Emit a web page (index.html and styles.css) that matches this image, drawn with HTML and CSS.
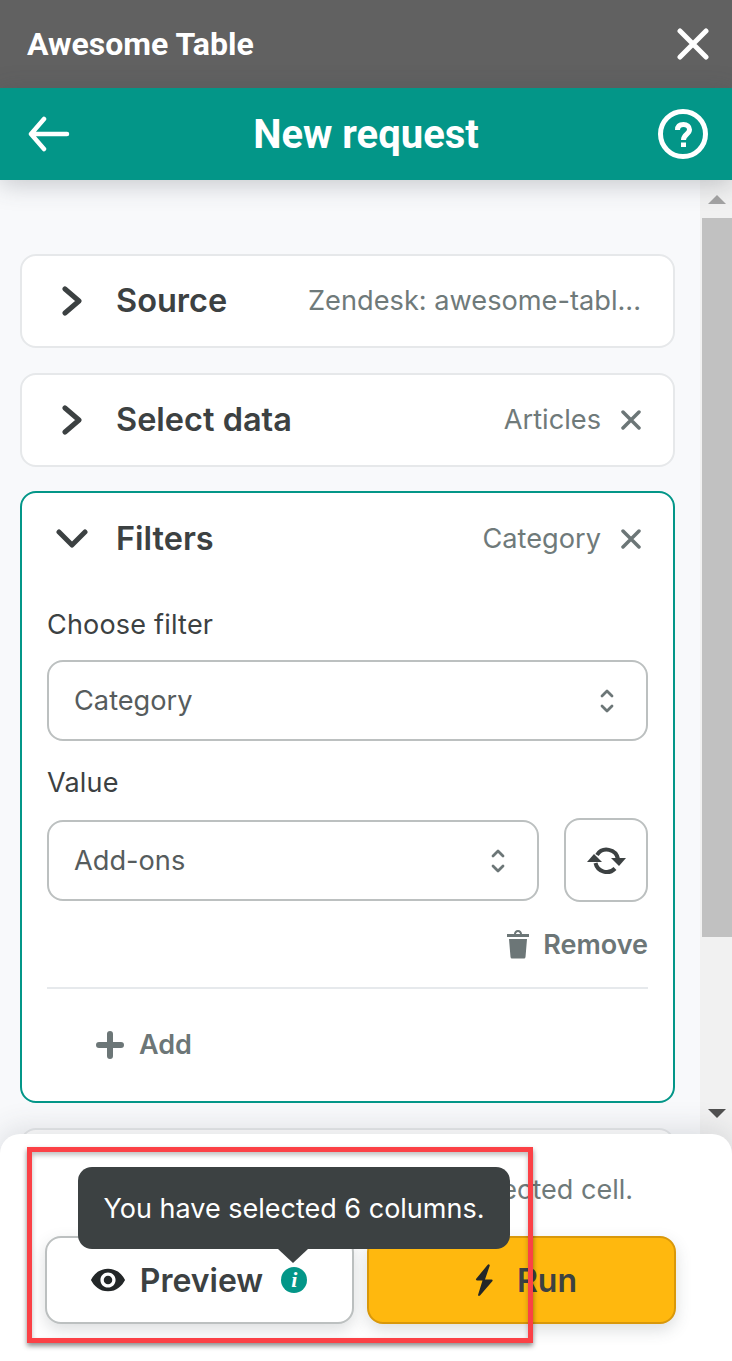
FILE: index.html
```html
<!DOCTYPE html>
<html lang="en">
<head>
<meta charset="utf-8">
<title>Awesome Table</title>
<link rel="stylesheet" href="styles.css">
</head>
<body>
<div class="app">
  <header class="titlebar">
    <span class="app-name">Awesome Table</span>
    <svg class="close-icon" viewBox="0 0 32 32"><path d="M3 3 L29 29 M29 3 L3 29"/></svg>
  </header>
  <header class="navbar">
    <svg class="back-icon" viewBox="0 0 42 36"><path d="M39 18 H4 M16 3 L3 18 L16 33"/></svg>
    <h1 class="nav-title">New request</h1>
    <svg class="help-icon" viewBox="0 0 50 50"><circle cx="25" cy="25" r="22.5"/><path d="M19.5 21 C19.500 17 22 15.500 25.500 15.500 C29 15.500 31.500 17.500 31.500 20.500 C31.500 25.500 25.500 25 25.500 31"/><path class="dot" d="M25.5 33.500 V38"/></svg>
  </header>
  <div class="body">
    <main class="content">
      <section class="card">
        <div class="card-head">
          <span class="chev-box"><svg class="chev" viewBox="0 0 20 30"><path d="M3 3 L17 15 L3 27"/></svg></span>
          <span class="card-title">Source</span>
          <span class="card-value">Zendesk: awesome-tabl...</span>
        </div>
      </section>
      <section class="card">
        <div class="card-head">
          <span class="chev-box"><svg class="chev" viewBox="0 0 20 30"><path d="M3 3 L17 15 L3 27"/></svg></span>
          <span class="card-title">Select data</span>
          <span class="card-value">Articles</span>
          <svg class="x-icon" viewBox="0 0 20 20"><path d="M2 2 L18 18 M18 2 L2 18"/></svg>
        </div>
      </section>
      <section class="card card-open">
        <div class="card-head">
          <span class="chev-box"><svg class="chev-down" viewBox="0 0 32 20"><path d="M3 3 L16 16 L29 3"/></svg></span>
          <span class="card-title">Filters</span>
          <span class="card-value">Category</span>
          <svg class="x-icon" viewBox="0 0 20 20"><path d="M2 2 L18 18 M18 2 L2 18"/></svg>
        </div>
        <div class="card-body">
          <label class="field-label">Choose filter</label>
          <div class="select select-full">
            <span>Category</span>
            <svg class="updown" viewBox="0 0 14 24"><path d="M2 7 L7 2 L12 7 M2 17 L7 22 L12 17"/></svg>
          </div>
          <label class="field-label field-label-value">Value</label>
          <div class="value-row">
            <div class="select select-grow">
              <span>Add-ons</span>
              <svg class="updown" viewBox="0 0 14 24"><path d="M2 7 L7 2 L12 7 M2 17 L7 22 L12 17"/></svg>
            </div>
            <button class="refresh">
              <svg class="refresh-icon" viewBox="0 0 40 30"><path class="ring" d="M11 10 A11.500 11.500 0 0 1 32 14 M29 23.500 A11.500 11.500 0 0 1 9.500 18"/><path class="tip" d="M1 17 L8 9 L16 17 Z M25 13 L40 13 L33 21 Z"/></svg>
            </button>
          </div>
          <div class="remove-row">
            <svg class="trash" viewBox="0 0 24 30"><path d="M1 5 H8 C8 3 9.500 1 12 1 C14.500 1 16 3 16 5 H23 V8 H1 Z M10 5 H14 C14 4 13 3 12 3 C11 3 10 4 10 5 Z M3 10 H21 L19.500 28 Q19.300 29.500 18 29.500 H6 Q4.700 29.500 4.500 28 Z"/></svg>
            <span>Remove</span>
          </div>
          <div class="add-row">
            <svg class="plus" viewBox="0 0 28 28"><path d="M14 3 V25 M3 14 H25"/></svg>
            <span>Add</span>
          </div>
        </div>
      </section>
      <section class="card card-next"></section>
    </main>
    <div class="scrollbar">
      <div class="scroll-arrow"><span class="tri-up"></span></div>
      <div class="scroll-thumb"></div>
      <div class="scroll-rest"></div>
      <div class="scroll-arrow-down"><span class="tri-down"></span></div>
    </div>
    <footer class="footer">
      <p class="footer-note">Results will be inserted in the selected cell.</p>
      <div class="actions">
        <button class="btn btn-preview">
          <svg class="eye" viewBox="0 0 38 26"><path fill-rule="evenodd" d="M19 1 C28 1 34 7 37 13 C34 19 28 25 19 25 C10 25 4 19 1 13 C4 7 10 1 19 1 Z M19 5 C14.500 5 11 8.500 11 13 C11 17.500 14.500 21 19 21 C23.500 21 27 17.500 27 13 C27 8.500 23.500 5 19 5 Z"/><circle cx="19" cy="13" r="4.500"/></svg>
          <span>Preview</span>
          <span class="info">i</span>
        </button>
        <button class="btn btn-run">
          <svg class="bolt" viewBox="0 0 20 34"><path d="M13.500 2 L2 16 Q1.500 17.500 3.500 17.500 H8.500 L4 32 Q4.500 33.500 6 32.500 L18.500 18 Q19 16.500 17.500 16.500 H11 L15.800 2.500 Q15 .5 13.500 2 Z"/></svg>
          <span>Run</span>
        </button>
      </div>
      <div class="tooltip">You have selected 6 columns.</div>
    </footer>
    <div class="annotation"></div>
  </div>
</div>
</body>
</html>
```

FILE: styles.css
```css
* { box-sizing: border-box; }
html, body { margin: 0; padding: 0; }
body { font-family: "Inter", "Liberation Sans", sans-serif; color: #3c4142; background: #f8f9fb; }
.app { width: 732px; height: 1361px; display: flex; flex-direction: column; overflow: hidden; }

.titlebar { height: 88px; flex: none; background: #616161; display: flex; align-items: center; justify-content: space-between; padding: 0 23px 0 27px; }
.app-name { font-family: "Roboto", sans-serif; font-weight: 700; font-size: 32px; color: #fff; }
.close-icon { width: 32px; height: 32px; fill: none; stroke: #fff; stroke-width: 5; stroke-linecap: round; }

.navbar { height: 92px; flex: none; background: #039688; display: flex; align-items: center; justify-content: space-between; padding: 0 24px 0 28px; box-shadow: 0 4px 24px rgba(60, 70, 80, .28); position: relative; z-index: 2; }
.nav-title { margin: 0; font-family: "Roboto", sans-serif; font-weight: 700; font-size: 40px; color: #fff; position: relative; left: 2px; }
.back-icon { width: 42px; height: 36px; fill: none; stroke: #fff; stroke-width: 4.500; stroke-linecap: round; stroke-linejoin: round; }
.help-icon { width: 50px; height: 50px; fill: none; stroke: #fff; stroke-width: 5; }
.help-icon .dot { stroke-width: 5; }

.body { flex: 1; display: flex; position: relative; min-height: 0; }
.content { width: 700px; flex: none; padding: 74px 25px 0 20px; display: flex; flex-direction: column; gap: 25px; overflow: hidden; }

.card { background: #fff; border: 2px solid #e6e8ea; border-radius: 16px; flex: none; height: 94px; }
.card-open { border-color: #039688; height: 612px; margin-top: -1px; }
.card-open .card-head { height: 90px; padding-top: 1px; }
.card-head { height: 89px; display: flex; align-items: center; padding: 0 32px 0 0; }
.chev-box { width: 94px; flex: none; display: flex; justify-content: center; padding-left: 6px; }
.chev { width: 20px; height: 30px; fill: none; stroke: #3c4142; stroke-width: 5; stroke-linecap: round; stroke-linejoin: round; }
.chev-down { width: 32px; height: 20px; fill: none; stroke: #3c4142; stroke-width: 5; stroke-linecap: round; stroke-linejoin: round; }
.card-title { font-size: 32.5px; font-weight: 600; color: #3c4142; flex: 1; }
.card-value { font-size: 27.2px; color: #6f7a7a; }
.x-icon { width: 20px; height: 20px; margin-left: 20px; fill: none; stroke: #6c7677; stroke-width: 3.500; stroke-linecap: round; }

.card-body { padding: 0 25px; }
.field-label { display: block; font-size: 27px; letter-spacing: .2px; color: #3c4142; line-height: 34px; }
.card-body > .field-label:first-child { margin-top: 25px; }
.field-label-value { margin-top: 25px; }
.select { height: 81px; border: 2px solid #bcc0c0; border-radius: 16px; display: flex; align-items: center; justify-content: space-between; padding: 0 32px 0 25px; font-size: 27.2px; color: #565c5d; background: #fff; }
.select-full { margin-top: 18px; }
.select-grow { flex: 1; }
.updown { width: 14px; height: 24px; fill: none; stroke: #6c7677; stroke-width: 2.800; stroke-linecap: round; stroke-linejoin: round; }
.value-row { display: flex; gap: 25px; margin-top: 20px; }
.refresh { width: 84px; height: 84px; margin-top: -2px; border: 2px solid #bcc0c0; border-radius: 16px; background: #fff; display: flex; align-items: center; justify-content: center; padding: 0; }
.refresh-icon { width: 40px; height: 30px; }
.refresh-icon .ring { fill: none; stroke: #3c4142; stroke-width: 4; }
.refresh-icon .tip { fill: #3c4142; }

.remove-row { display: flex; justify-content: flex-end; align-items: center; gap: 13px; margin-top: 26px; font-size: 27px; font-weight: 600; color: #6c7677; height: 32px; }
.trash { width: 24px; height: 30px; fill: #6c7677; }
.add-row { margin-top: 27px; border-top: 2px solid #e6e9ec; padding: 39px 0 0 49px; display: flex; align-items: center; gap: 15px; font-size: 27px; font-weight: 600; color: #6c7677; }
.plus { width: 28px; height: 28px; fill: none; stroke: #6c7677; stroke-width: 6; stroke-linecap: round; }

.scrollbar { width: 32px; flex: none; background: #f1f1f1; display: flex; flex-direction: column; }
.scroll-arrow { height: 38px; flex: none; display: flex; justify-content: center; align-items: center; padding-left: 2px; }
.scroll-thumb { height: 719px; flex: none; margin-left: 2px; background: #c1c1c1; }
.scroll-rest { height: 166px; flex: none; }
.scroll-arrow-down { height: 20px; flex: none; display: flex; justify-content: center; align-items: center; padding-left: 2px; }
.tri-up { width: 0; height: 0; border-left: 9px solid transparent; border-right: 9px solid transparent; border-bottom: 9px solid #a3a3a3; }
.tri-down { width: 0; height: 0; border-left: 9px solid transparent; border-right: 9px solid transparent; border-top: 9px solid #505050; }

.footer { position: absolute; left: 0; right: 0; top: 954px; height: 227px; background: #fff; border-radius: 20px 20px 0 0; box-shadow: 0 -4px 30px rgba(60, 70, 80, .16); z-index: 3; padding: 39px 56px 0 45px; }
.footer-note { margin: 0 -56px 0 0; height: 34px; line-height: 34px; font-size: 27px; color: #6f7a7a; text-align: right; padding-right: 99px; white-space: nowrap; }
.actions { display: grid; grid-template-columns: 1fr 1fr; gap: 13px; margin-top: 29px; width: 631px; }
.btn { height: 88px; min-width: 0; border-radius: 16px; display: flex; align-items: center; justify-content: center; font-family: "Inter", sans-serif; font-size: 32px; font-weight: 600; color: #3c4142; padding: 0; box-shadow: 0 6px 16px rgba(60, 70, 80, .18); }
.btn-preview { background: #fff; border: 2px solid #bcc0c0; gap: 14px; padding-right: 2px; }
.btn-run { background: #ffb80e; border: 2px solid #d9980a; gap: 23px; padding-left: 8px; }
.eye { width: 36px; height: 26px; fill: #232728; }
.bolt { width: 20px; height: 34px; fill: #232728; }
.info { width: 26px; height: 26px; border-radius: 50%; background: #039688; color: #fff; font-family: "Liberation Serif", serif; font-style: italic; font-weight: 700; font-size: 22px; line-height: 26px; text-align: center; margin-left: 4px; }

.tooltip { position: absolute; left: 78px; top: 33px; width: 432px; height: 82px; background: #3c4142; border-radius: 14px; color: #fff; font-size: 27px; display: flex; align-items: center; justify-content: center; }
.tooltip::after { content: ""; position: absolute; left: 200px; top: 82px; width: 0; height: 0; border-left: 15px solid transparent; border-right: 15px solid transparent; border-top: 14px solid #3c4142; }

.annotation { position: absolute; left: 27px; top: 967px; width: 506px; height: 196px; border: 5px solid #fb4146; box-shadow: 0 3px 5px rgba(0, 0, 0, .45), inset 0 3px 5px rgba(0, 0, 0, .25); z-index: 4; pointer-events: none; }
```
